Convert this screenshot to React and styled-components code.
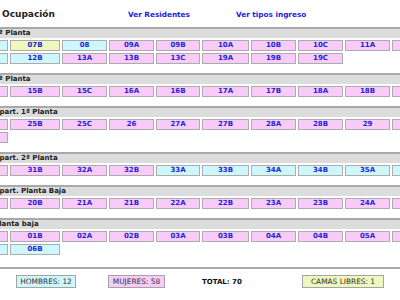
import React from 'react';
import styled, { createGlobalStyle } from 'styled-components';

const Global = createGlobalStyle`
  html, body { margin: 0; padding: 0; overflow: hidden; background: #fff; }
  body { font-family: "DejaVu Sans", Verdana, sans-serif; }
`;

const COLS = [45, 50, 45, 45, 44, 47, 45, 45, 45, 45];

const BED_COLORS = {
  c: '#cdf6fd',
  p: '#f8cbf8',
  y: '#eef7bd',
};

const Page = styled.div`
  margin-left: -37px;
  width: 600px;
`;

const TopBar = styled.div`
  display: grid;
  grid-template-columns: 126px 108px auto;
  align-items: baseline;
  height: 27px;
  box-sizing: border-box;
  padding: 9px 0 0 39px;
`;

const Title = styled.h1`
  margin: 0;
  font-size: 9px;
  font-weight: bold;
  color: #222;
`;

const NavLink = styled.a`
  font-size: 7.3px;
  font-weight: bold;
  color: #2323d8;
  text-decoration: none;
`;

const Section = styled.section`
  padding-bottom: 9px;
`;

const SectionHeader = styled.div`
  height: 9px;
  border-top: 2px solid #a9a9a9;
  background: #dcdcdc;
  font-size: 7px;
  font-weight: bold;
  color: #1a1a1a;
  line-height: 9px;
  padding-left: 31px;
  margin-bottom: 2px;
  white-space: nowrap;
`;

const Grid = styled.div`
  display: grid;
  grid-template-columns: ${COLS.map((w) => w + 'px').join(' ')};
  column-gap: 2px;
  row-gap: 2px;
`;

const Bed = styled.div`
  height: 11px;
  box-sizing: border-box;
  border: 1px solid #acacac;
  background: ${(p) => BED_COLORS[p.$kind]};
  font-size: 7px;
  font-weight: bold;
  color: #2323d8;
  text-align: center;
  line-height: 9px;
  overflow: hidden;
  white-space: nowrap;
`;

const Divider = styled.hr`
  margin: 3px 0 0 0;
  border: 0;
  height: 2px;
  background: #a8a8a8;
`;

const Footer = styled.div`
  display: grid;
  grid-template-columns: 92px 94px 100px auto;
  align-items: center;
  margin-top: 6px;
  padding-left: 53px;
`;

const CountBox = styled.div`
  justify-self: start;
  height: 13px;
  box-sizing: border-box;
  width: ${(p) => p.$w}px;
  border: 1px solid #a4a4a4;
  background: ${(p) => BED_COLORS[p.$kind]};
  font-size: 7.4px;
  color: #333;
  text-align: center;
  line-height: 11px;
  white-space: nowrap;
`;

const Total = styled.div`
  font-size: 7px;
  font-weight: bold;
  color: #111;
  white-space: nowrap;
`;

const b = (name, kind) => ({ name, kind });

const SECTIONS = [
  {
    title: '1ª Planta',
    beds: [
      b('07A', 'c'), b('07B', 'y'), b('08', 'c'), b('09A', 'p'), b('09B', 'p'),
      b('10A', 'p'), b('10B', 'p'), b('10C', 'p'), b('11A', 'p'), b('11B', 'p'),
      b('12A', 'c'), b('12B', 'c'), b('13A', 'p'), b('13B', 'p'), b('13C', 'p'),
      b('19A', 'p'), b('19B', 'p'), b('19C', 'p'),
    ],
  },
  {
    title: '2ª Planta',
    beds: [
      b('15A', 'p'), b('15B', 'p'), b('15C', 'p'), b('16A', 'p'), b('16B', 'p'),
      b('17A', 'p'), b('17B', 'p'), b('18A', 'p'), b('18B', 'p'), b('18C', 'p'),
    ],
  },
  {
    title: 'Apart. 1ª Planta',
    beds: [
      b('25A', 'p'), b('25B', 'p'), b('25C', 'p'), b('26', 'p'), b('27A', 'p'),
      b('27B', 'p'), b('28A', 'p'), b('28B', 'p'), b('29', 'p'), b('30A', 'p'),
      b('30B', 'p'),
    ],
  },
  {
    title: 'Apart. 2ª Planta',
    beds: [
      b('31A', 'p'), b('31B', 'p'), b('32A', 'p'), b('32B', 'p'), b('33A', 'c'),
      b('33B', 'c'), b('34A', 'c'), b('34B', 'c'), b('35A', 'c'), b('35B', 'c'),
    ],
  },
  {
    title: 'Apart. Planta Baja',
    beds: [
      b('20A', 'p'), b('20B', 'p'), b('21A', 'p'), b('21B', 'p'), b('22A', 'p'),
      b('22B', 'p'), b('23A', 'p'), b('23B', 'p'), b('24A', 'p'), b('24B', 'p'),
    ],
  },
  {
    title: 'Planta baja',
    beds: [
      b('01A', 'p'), b('01B', 'p'), b('02A', 'p'), b('02B', 'p'), b('03A', 'p'),
      b('03B', 'p'), b('04A', 'p'), b('04B', 'p'), b('05A', 'p'), b('05B', 'p'),
      b('06A', 'c'), b('06B', 'c'),
    ],
  },
];

export default function App() {
  return (
    <Page>
      <Global />
      <TopBar>
        <Title>Ocupación</Title>
        <NavLink href="#">Ver Residentes</NavLink>
        <NavLink href="#">Ver tipos ingreso</NavLink>
      </TopBar>
      {SECTIONS.map((s) => (
        <Section key={s.title}>
          <SectionHeader>{s.title}</SectionHeader>
          <Grid>
            {s.beds.map((bed) => (
              <Bed key={bed.name} $kind={bed.kind}>{bed.name}</Bed>
            ))}
          </Grid>
        </Section>
      ))}
      <Divider />
      <Footer>
        <CountBox $kind="c" $w={60}>HOMBRES: 12</CountBox>
        <CountBox $kind="p" $w={57}>MUJERES: 58</CountBox>
        <Total>TOTAL: 70</Total>
        <CountBox $kind="y" $w={82}>CAMAS LIBRES: 1</CountBox>
      </Footer>
    </Page>
  );
}
